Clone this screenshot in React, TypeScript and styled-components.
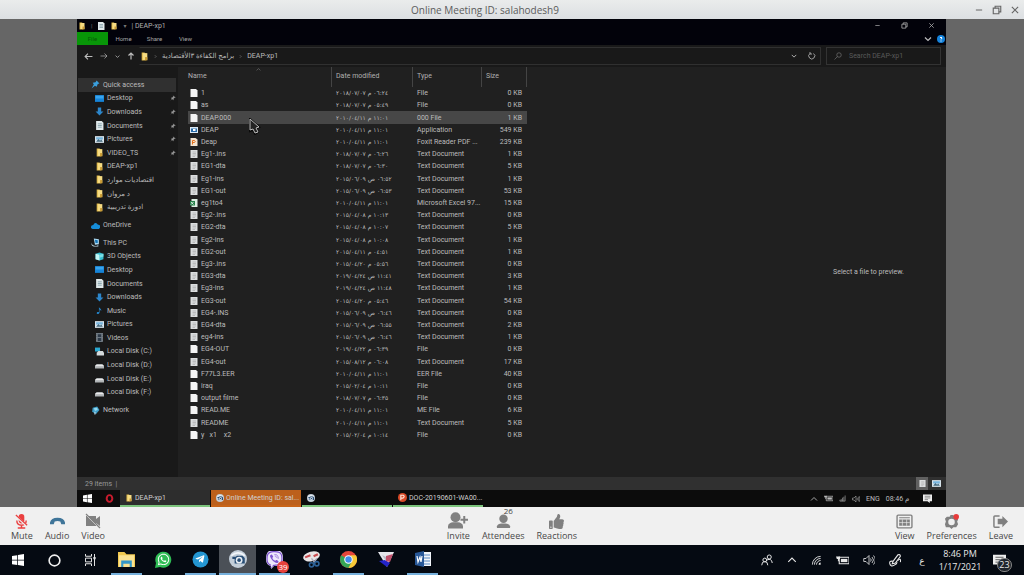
import React from "react";
import styled, { createGlobalStyle } from "styled-components";
import { FaThumbsUp, FaWhatsapp, FaViber, FaTelegramPlane } from "react-icons/fa";

const Global = createGlobalStyle`
  * { box-sizing: border-box; }
  body { margin: 0; background: #666; font-family: "Open Sans", "Noto Sans", "DejaVu Sans", sans-serif; }
  button { border: 0; padding: 0; background: none; font: inherit; color: inherit; }
  svg { display: block; flex: none; }
  ul { list-style: none; margin: 0; padding: 0; }
`;

/* ---------- page frame ---------- */
const Page = styled.div`
  min-height: 100vh;
  display: flex;
  flex-direction: column;
`;
const MeetingTitle = styled.header`
  height: 19px;
  display: grid;
  grid-template-columns: 1fr auto 1fr;
  align-items: center;
  background: linear-gradient(#eaecec, #dcdfe2);
  line-height: 18px;
  color: #5c5c5c;
`;
const TitleText = styled.h1`
  grid-column: 2;
  margin: 0 0 0 -54px;
  font-size: 10px;
  font-weight: 400;
`;
const WindowButtons = styled.div`
  justify-self: end;
  display: flex;
  gap: 8px;
  padding-right: 4px;
  color: #666;
`;
const Stage = styled.main`
  flex: 1;
  display: flex;
  padding: 0 78px 0 77px;
  background: #666;
`;
const SharedScreen = styled.section`
  flex: 1;
  min-width: 0;
  display: flex;
  flex-direction: column;
  background: #202020;
  color: #bcbcbc;
  font-family: Roboto, "Open Sans", "DejaVu Sans", sans-serif;
  font-size: 7px;
  line-height: 10px;
`;

/* ---------- explorer window ---------- */
const ExplorerTitle = styled.div`
  height: 13px;
  display: flex;
  align-items: center;
  gap: 5px;
  padding-left: 1px;
  background: #02020a;
  color: #b0b0b0;
`;
const Thin = styled.span`
  color: #777;
  font-size: 6px;
`;
const ExplorerButtons = styled.div`
  margin-left: auto;
  display: flex;
  gap: 20px;
  padding-right: 11px;
`;
const Ribbon = styled.nav`
  height: 13px;
  display: flex;
  align-items: stretch;
  background: #02020a;
  font-size: 6px;
`;
const RibbonTab = styled.button<{ $file?: boolean }>`
  width: 31px;
  background: ${(p) => (p.$file ? "#089608" : "transparent")};
  color: ${(p) => (p.$file ? "#075a07" : "#a5a5a5")};
`;
const RibbonEnd = styled.div`
  margin-left: auto;
  display: flex;
  align-items: center;
  gap: 5px;
  padding-right: 1px;
`;
const NavRow = styled.div`
  height: 22px;
  display: flex;
  align-items: center;
  padding: 0 5px 0 7px;
  background: #191919;
`;
const NavButtons = styled.div`
  width: 55px;
  display: flex;
  align-items: center;
  gap: 7px;
`;
const AddressBar = styled.div`
  flex: 1;
  height: 18px;
  display: flex;
  align-items: center;
  gap: 4px;
  margin-right: 5px;
  padding: 0 4px 0 0;
  border: 1px solid #303030;
  border-left-color: transparent;
`;
const AddressEnd = styled.div`
  margin-left: auto;
  display: flex;
  align-items: center;
  gap: 11px;
`;
const SearchBox = styled.label`
  width: 115px;
  height: 18px;
  display: flex;
  align-items: center;
  gap: 7px;
  padding: 0 7px;
  border: 1px solid #333;
  color: #777;
`;
const SearchInput = styled.input`
  width: 80px;
  border: 0;
  padding: 0;
  background: none;
  font: inherit;
  color: #aaa;
  &::placeholder { color: #5a5a5a; opacity: 1; }
`;
const ExplorerBody = styled.div`
  flex: 1;
  display: flex;
`;
const Sidebar = styled.aside`
  width: 101px;
  padding: 11px 2px 0 1px;
  background: #191919;
`;
const Group = styled.ul<{ $height: number }>`
  height: ${(p) => p.$height}px;
  margin-bottom: 4px;
  display: flex;
  flex-direction: column;
`;
const SideItem = styled.li<{ $root?: boolean; $active?: boolean }>`
  flex: 1;
  display: flex;
  align-items: center;
  gap: 3px;
  padding-left: ${(p) => (p.$root ? 13 : 17)}px;
  background: ${(p) => (p.$active ? "#303030" : "transparent")};
  white-space: nowrap;
`;
const PinSlot = styled.span`
  margin-left: auto;
`;
const ListPane = styled.div`
  flex: 1;
  position: relative;
  padding: 0 0 0 10px;
`;
const Files = styled.table`
  width: 339px;
  height: 374px;
  table-layout: fixed;
  border-collapse: separate;
  border-spacing: 0;
  white-space: nowrap;
`;
const Head = styled.th<{ $w: number }>`
  width: ${(p) => p.$w}px;
  height: 20px;
  padding: 0 0 2px ${(p) => (p.$w === 144 ? 0 : 4)}px;
  border-right: 1px solid #444;
  font-weight: 400;
  text-align: left;
  color: #b0b0b0;
`;
const FileRow = styled.tr<{ $selected?: boolean }>`
  background: ${(p) => (p.$selected ? "#474747" : "transparent")};
`;
const Cell = styled.td<{ $kind?: "name" | "size" }>`
  padding: 0 ${(p) => (p.$kind === "size" ? 5 : 0)}px 0 ${(p) => (p.$kind === "name" ? 2 : 4)}px;
  text-align: ${(p) => (p.$kind === "size" ? "right" : "left")};
  overflow: hidden;
`;
const NameBox = styled.div`
  display: flex;
  align-items: center;
  gap: 3px;
  white-space: pre;
`;
const DateText = styled.span`
  display: block;
  direction: ltr;
  unicode-bidi: bidi-override;
  font-family: "DejaVu Sans", sans-serif;
  font-size: 6px;
`;
const Pointer = styled.div`
  position: absolute;
  left: 71px;
  top: 51px;
`;
const SortMark = styled.div`
  position: absolute;
  left: 78px;
  top: 0;
  color: #888;
`;
const Preview = styled.aside`
  width: 155px;
  display: flex;
  align-items: center;
  justify-content: center;
`;
const StatusBar = styled.div`
  height: 13px;
  display: flex;
  align-items: center;
  padding: 0 4px 0 8px;
  background: #303030;
  color: #999;
`;
const ViewButtons = styled.div`
  margin-left: auto;
  display: flex;
  gap: 2px;
`;
const ViewButton = styled.button<{ $on?: boolean }>`
  width: 12px;
  height: 13px;
  display: grid;
  place-items: center;
  background: ${(p) => (p.$on ? "#606060" : "transparent")};
`;
const InnerTaskbar = styled.div`
  height: 17px;
  display: flex;
  background: #0c0c0c;
`;
const InnerStart = styled.button<{ $w: number }>`
  width: ${(p) => p.$w}px;
  display: grid;
  place-items: center;
`;
const InnerTask = styled.button<{ $w: number; $bg: string; $line: string }>`
  width: ${(p) => p.$w}px;
  display: flex;
  align-items: center;
  gap: 2px;
  padding-left: 5px;
  margin-right: 1px;
  background: ${(p) => p.$bg};
  border-bottom: 2px solid ${(p) => p.$line};
  color: #d0d0d0;
  white-space: nowrap;
`;
const InnerTray = styled.div`
  margin-left: auto;
  display: flex;
  align-items: center;
  gap: 6px;
  padding-right: 14px;
`;

/* ---------- meeting toolbar ---------- */
const Toolbar = styled.div`
  height: 38px;
  display: grid;
  grid-template-columns: 1fr auto 1fr;
  background: #f0f0f0;
  color: #484848;
`;
const ToolGroup = styled.div<{ $align?: string }>`
  display: flex;
  gap: 12px;
  padding: 0 11px;
  justify-content: ${(p) => p.$align || "flex-start"};
`;
const Tool = styled.button`
  display: flex;
  flex-direction: column;
  align-items: center;
  padding-top: 5px;
  font-size: 9px;
  line-height: 12px;
`;
const ToolIcon = styled.span<{ $color?: string }>`
  height: 18px;
  display: flex;
  align-items: center;
  position: relative;
  color: ${(p) => p.$color || "#808080"};
`;
const Count = styled.span`
  position: absolute;
  left: 8px;
  top: -7px;
  font-size: 8px;
  color: #444;
`;

/* ---------- desktop taskbar ---------- */
const Taskbar = styled.footer`
  height: 30px;
  display: flex;
  background: #050a12;
  color: #e8e8e8;
`;
const TaskButton = styled.button<{ $run?: boolean; $active?: boolean }>`
  width: ${(p) => (p.$active ? 37 : 31)}px;
  margin: 0 ${(p) => (p.$active ? 0 : 3)}px;
  display: grid;
  place-items: center;
  position: relative;
  background: ${(p) => (p.$active ? "#4b5057" : "transparent")};
  border-bottom: 2px solid ${(p) => (p.$run || p.$active ? "#76b0dc" : "transparent")};
`;
const SystemButton = styled.button`
  width: 36px;
  display: grid;
  place-items: center;
`;
const Badge = styled.span`
  position: absolute;
  right: 1px;
  bottom: 0;
  width: 12px;
  height: 12px;
  border-radius: 50%;
  background: #e8413c;
  font-size: 8px;
  line-height: 12px;
  color: #fff;
`;
const Tray = styled.div`
  margin-left: auto;
  display: flex;
  align-items: center;
  gap: 8px;
`;
const TrayIcons = styled.div`
  display: flex;
  align-items: center;
  gap: 14px;
`;
const Language = styled.span`
  width: 12px;
  font-size: 9px;
  text-align: center;
`;
const Clock = styled.time`
  width: 48px;
  font-size: 9px;
  line-height: 13px;
  text-align: center;
`;
const Notice = styled.button`
  position: relative;
  width: 32px;
  height: 30px;
  padding: 0 0 0 1px;
`;
const NoticeCount = styled.span`
  position: absolute;
  left: 5px;
  top: 13px;
  width: 15px;
  height: 14px;
  border: 1px solid #888;
  border-radius: 7px;
  background: #20252c;
  font-size: 9px;
  line-height: 12px;
`;

/* ---------- drawings ---------- */
type IconProps = { kind: string; size?: number };

function Icon({ kind, size = 9 }: IconProps) {
  const line = { fill: "none", stroke: "currentColor", strokeWidth: 1.3 };
  const art: Record<string, React.ReactNode> = {
    folder: (<><path d="M3 1h5l2 2v12H3z" fill="#e0b94a" /><path d="M5 2h8v12H5z" fill="#f6dc83" /><path d="M9 9h4v6H9z" fill="#c99b34" /></>),
    page: (<path d="M1 0h11l3 3v13H1z" fill="#f4f4f4" />),
    text: (<><path d="M1 0h14v16H1z" fill="#dcdedf" /><path d="M5 4h7M5 7h7M5 10h7M5 13h5" stroke="#999" strokeWidth="1" /></>),
    app: (<><path d="M0 2h16v12H0z" fill="#dce9f4" /><path d="M2 5h12v7H2z" fill="#286aa7" /><path d="M6 6h5v4H6z" fill="#fff" /></>),
    pdf: (<><path d="M1 0h10l4 3v13H1z" fill="#f5e4d0" /><path d="M5 13V5h4q3 1 0 4H6" fill="none" stroke="#e4711c" strokeWidth="2" /></>),
    excel: (<><path d="M3 0h12v16H3z" fill="#dceee2" /><path d="M0 4h10v9H0z" fill="#27804a" /><path d="m2 6 5 5m0-5-5 5" stroke="#fff" strokeWidth="1.5" /></>),
    star: (<path d="M10 1l5 5-3 1-2 5-3-2-6 5 4-7-2-3 5-1z" fill="#3aa0de" />),
    desktop: (<><path d="M0 2h16v12H0z" fill="#1684d8" /><path d="M1 3h14v5H1z" fill="#38a5ef" /></>),
    download: (<path d="M5 1h6v7h4l-7 7-7-7h4z" fill="#2c86cb" />),
    doc: (<><path d="M2 0h10l3 3v13H2z" fill="#dfe8ea" /><path d="M5 5h7M5 8h7M5 11h7" stroke="#71909c" strokeWidth="1.3" /></>),
    picture: (<><path d="M0 2h16v12H0z" fill="#d8e4ec" /><path d="M2 4h12v4H2z" fill="#76b4de" /><path d="m2 12 4-5 3 3 2-2 3 4z" fill="#43697e" /></>),
    cloud: (<path d="M3 14q-5-1-2-6l3-1q3-6 8-1 6 1 4 6l-2 2z" fill="#168dd9" />),
    pc: (<><path d="M5 1l9 1v9l-7 1z" fill="#a9d7ef" /><path d="M7 3l5 1v5L8 9z" fill="#1675b5" /><path d="M1 8q0 6 8 6l4-1v2H5Q0 14 1 8" fill="#c5e4f2" /></>),
    cube: (<><path d="M1 3l7-2 7 2v10l-7 2-7-2z" fill="#38bdd0" /><path d="M1 3l7 2v10l-7-2z" fill="#c5f5f5" /><path d="M8 5l7-2v5l-7 2z" fill="#78dfe6" /></>),
    music: (<path d="M7 1c0 4 5 3 4 8-1-2-2-3-3-3v6c-1 3-5 3-5 1s2-3 4-2z" fill="#2588cf" />),
    video: (<><path d="M2 0h12v16H2z" fill="#6c7781" /><path d="M5 2h6v5H5zm0 7h6v5H5z" fill="#2c3947" /><path d="M3 1v14M13 1v14" stroke="#bbb" strokeDasharray="1 2" /></>),
    disk: (<><path d="M0 10l3-3h10l3 3v5H0z" fill="#b0b4b6" /><path d="M1 9h14v2H1z" fill="#eee" /></>),
    sysdisk: (<><path d="M0 1h9v7H0z" fill="#29a8d1" /><path d="M3 10l3-3h8l2 3v5H3z" fill="#d4dadc" /></>),
    network: (<><path d="M3 3l8-2 4 6-6 7-7-4z" fill="#3e9dc7" /><path d="M5 4l6-1 1 4-5 2z" fill="#93d9ef" /><path d="M7 10v5" stroke="#c1e1ef" strokeWidth="2" /></>),
    pin: (<path d="M9 2l5 5-2 0-3 3v3L3 8l3-1 3-3zM6 10l-4 4" fill="#999" stroke="#999" />),
    min: (<path d="M3 8h10" {...line} strokeWidth={1.6} />),
    max: (<><path d="M2 5h9v9H2z" {...line} strokeWidth={1.8} /><path d="M5 5V2h9v9h-3" {...line} strokeWidth={1.8} /></>),
    close: (<path d="M3 3l10 10M13 3L3 13" {...line} strokeWidth={1.8} />),
    left: (<path d="M15 8H2m5-5L2 8l5 5" {...line} strokeWidth={2} />),
    right: (<path d="M1 8h13M9 3l5 5-5 5" {...line} />),
    up: (<path d="M8 15V2M3 7l5-5 5 5" {...line} strokeWidth={2.4} />),
    down: (<path d="M2 5l6 6 6-6" {...line} strokeWidth={2.4} />),
    chevron: (<path d="M2 11l6-6 6 6" {...line} strokeWidth={1.7} />),
    next: (<path d="M6 4l4 4-4 4" {...line} />),
    refresh: (<path d="M11 3a6 6 0 1 1-7 0M4 0v4h4" {...line} strokeWidth={1.6} />),
    search: (<><circle cx="10" cy="6" r="4.5" {...line} /><path d="M7 9l-6 6" {...line} /></>),
    windows: (<path d="M0 2.5l7-1v6H0zM8 1.3L16 0v7.5H8zM0 8.5h7v6l-7-1zM8 8.5h8V16l-8-1.3z" fill="#fff" />),
    opera: (<ellipse cx="8" cy="8" rx="5" ry="6" fill="none" stroke="#c81c2e" strokeWidth="3.5" />),
    ball: (<><circle cx="8" cy="8" r="8" fill="#c3ced9" /><path d="M2 5q6-5 12 0" fill="none" stroke="#f2f6fa" strokeWidth="1.5" /><path d="M3 8V6h3l1-1h5l2 2v5H5V8z" fill="#284e76" /><circle cx="9" cy="9" r="3" fill="#e8eef4" /><circle cx="9" cy="9" r="1.6" fill="#284e76" /></>),
    ppt: (<><circle cx="8" cy="8" r="8" fill="#d84a28" /><path d="M5 13V4h4q4 2 0 5H6" fill="none" stroke="#ffe4d8" strokeWidth="2" /></>),
    battery: (<><path d="M4 4h12v8H4z" {...line} /><path d="M6 6h8v4H6z" fill="currentColor" /><path d="M0 3h5v3H1z" fill="currentColor" /><path d="M3 6v3" {...line} /></>),
    wifi: (<><path d="M2 14A12 12 0 0 1 14 2M5 14a9 9 0 0 1 9-9M8 14a6 6 0 0 1 6-6" {...line} /><path d="M11 14a3 3 0 0 1 3-3v3z" fill="currentColor" /></>),
    bars: (<path d="M2 14v-3M5 14V9M8 14V6M11 14V4M14 14V1M2 14h12" {...line} />),
    sound: (<path d="M1 6h3l4-4v12l-4-4H1zM10 6q2 2 0 4M12 4q4 4 0 8M14 2q5 6 0 12" {...line} strokeWidth={1.1} />),
    note: (<><path d="M0 1h16v12h-4v3l-4-3H0z" fill="#eee" /><path d="M3 4h10M3 7h10M3 10h6" stroke="#444" /></>),
    people: (<><circle cx="5" cy="8" r="2.5" {...line} /><path d="M1 15q0-5 4-5t4 5" {...line} /><circle cx="11" cy="4" r="2.7" {...line} /><path d="M8 8q6-3 7 4" {...line} /></>),
    pen: (<><path d="M5 9l6-8q3-1 3 2l-6 8-4 1z" {...line} /><path d="M5 9q-5-1-4 3t5 2 4-4M11 8q4-4 3 2" {...line} /></>),
    cortana: (<circle cx="8" cy="8" r="6.6" fill="none" stroke="#eee" strokeWidth="2" />),
    tasks: (<><path d="M2 0v3h8V0M2 5.5h8v5H2zM2 16v-3h8v3M14 0v16" {...line} /><path d="M12.5 4h3v3h-3z" fill="currentColor" /></>),
    explorer: (<><path d="M0 1h6l2 2h8v12H0z" fill="#f1c950" /><path d="M1 4h14v11H1z" fill="#fbe393" /><path d="M3 9h10v6h-2v-3H5v3H3z" fill="#3498c8" /></>),
    snip: (<><ellipse cx="8" cy="5" rx="8" ry="4.5" transform="rotate(-15 8 5)" fill="#e9e5e6" /><path d="M2 6l5-2M10 5l4-2" stroke="#c84c50" strokeWidth="2" /><path d="M8 7l3 4M13 7l-3 4" stroke="#aab" strokeWidth="1.3" /><circle cx="8" cy="13" r="2" fill="none" stroke="#2d6298" strokeWidth="1.5" /><circle cx="13" cy="12" r="2" fill="none" stroke="#2d6298" strokeWidth="1.5" /></>),
    chrome: (<><circle cx="8" cy="8" r="8" fill="#e4463a" /><path d="M8 8L1.1 4A8 8 0 0 0 8 16l4-6z" fill="#35a554" /><path d="M8 16l4-8-2-4h5A8 8 0 0 1 8 16" fill="#f7ca38" /><circle cx="8" cy="8" r="4" fill="#fff" /><circle cx="8" cy="8" r="3" fill="#408be8" /></>),
    gem: (<><path d="M0 1h16l-7 15z" fill="#e5e6ec" /><path d="M1 10l6-1 5 3-3 4z" fill="#2424c8" /><path d="M8 5l7-2-3 8-4-1z" fill="#c0506c" /><path d="M4 4l4 2v4z" fill="#b8bac8" /></>),
    word: (<><path d="M6 1h10v14H6z" fill="#f2f5fa" /><path d="M8 4h7M8 7h7M8 10h7M8 13h7" stroke="#5688c2" /><path d="M0 2l9-2v16l-9-2z" fill="#285898" /><path d="M2 5l1 6 2-5 1 5 1-6" fill="none" stroke="#fff" strokeWidth="1.2" /></>),
    phone: (<path d="M0 9q1-5 8-5t8 5v2l-4 0-1-3Q8 7 5 8l-1 3H0z" fill="#3f7599" />),
    mic: (<><rect x="5" y="0" width="6" height="10" rx="3" fill="currentColor" /><path d="M3 7q0 5 5 5t5-5M8 12v3M4 15h8" {...line} strokeWidth={1.5} /><path d="M2 2l12 11" stroke="#f0f0f0" strokeWidth="2.4" /><path d="M2 1l12 11" stroke="currentColor" strokeWidth="1.3" /></>),
    camera: (<><path d="M1 3h10v3l4-3v10l-4-3v3H1z" fill="currentColor" /><path d="M0 1l14 14" stroke="#f0f0f0" strokeWidth="1" /><path d="M1 1l14 14" stroke="currentColor" strokeWidth="1.3" /></>),
    person: (<><circle cx="8" cy="5" r="4.5" fill="currentColor" /><path d="M1 15v-2q1-3 5-3h4q4 0 5 3v2z" fill="currentColor" /></>),
    invite: (<><circle cx="6" cy="5" r="4" fill="currentColor" /><path d="M0 14v-2q1-3 4-3h4q3 0 4 3v2z" fill="currentColor" /><path d="M13 4v6M10 7h6" stroke="currentColor" strokeWidth="1.6" /></>),
    grid: (<><rect x="1" y="2" width="14" height="12" rx="1" {...line} /><path d="M3 4h10v1H3zM3 6h10v6H3z" fill="currentColor" /><path d="M3 9h10M6 6v6M10 6v6" stroke="#f0f0f0" strokeWidth="0.6" /></>),
    gear: (<><path d="M7 1h3l1 2 3 0 1 3-1 2 1 3-2 3-3 0-2 2-2-2-4 0-1-3 1-3-1-3 2-2 3 0z" fill="currentColor" /><circle cx="8" cy="8.500" r="3.500" fill="#f0f0f0" /><circle cx="13" cy="3" r="3" fill="#e83b3b" /></>),
    leave: (<><path d="M7 2H2Q1 2 1 3v10q0 1 1 1h5" {...line} strokeWidth={1.6} /><path d="M5 5h5V2l6 6-6 6v-3H5z" fill="currentColor" /></>),
  };
  return <svg width={size} height={size} viewBox="0 0 16 16" aria-hidden="true">{art[kind]}</svg>;
}

/* ---------- data ---------- */
const quick: [string, string, boolean?][] = [
  ["desktop", "Desktop", true], ["download", "Downloads", true], ["doc", "Documents", true],
  ["picture", "Pictures", true], ["folder", "VIDEO_TS", true], ["folder", "DEAP-xp1"],
  ["folder", "اقتصاديات موارد"], ["folder", "د مروان"], ["folder", "ادورة تدريبية"],
];
const places: [string, string][] = [
  ["cube", "3D Objects"], ["desktop", "Desktop"], ["doc", "Documents"], ["download", "Downloads"],
  ["music", "Music"], ["picture", "Pictures"], ["video", "Videos"], ["sysdisk", "Local Disk (C:)"],
  ["disk", "Local Disk (D:)"], ["disk", "Local Disk (E:)"], ["disk", "Local Disk (F:)"],
];
const T = "Text Document";
const files: [string, string, string, string, string][] = [
  ["page", "1", "٢٠١٨/٠٧/٠٧ م ٠٦:٢٤", "File", "0 KB"],
  ["page", "as", "٢٠١٨/٠٧/٠٧ م ٠٥:٤٩", "File", "0 KB"],
  ["page", "DEAP.000", "٢٠١٠/٠٤/١١ م ١١:٠١", "000 File", "1 KB"],
  ["app", "DEAP", "٢٠١٠/٠٤/١١ م ١١:٠١", "Application", "549 KB"],
  ["pdf", "Deap", "٢٠١٠/٠٤/١١ م ١١:٠١", "Foxit Reader PDF ...", "239 KB"],
  ["text", "Eg1-.ins", "٢٠١٨/٠٧/٠٧ م ٠٦:٢٦", T, "1 KB"],
  ["text", "EG1-dta", "٢٠١٨/٠٧/٠٧ م ٠٦:٣٠", T, "5 KB"],
  ["text", "Eg1-ins", "٢٠١٥/٠٦/٠٩ ص ٠٦:٥٢", T, "1 KB"],
  ["text", "EG1-out", "٢٠١٥/٠٦/٠٩ ص ٠٦:٥٣", T, "53 KB"],
  ["excel", "eg1to4", "٢٠١٠/٠٤/١١ م ١١:٠١", "Microsoft Excel 97...", "15 KB"],
  ["text", "Eg2-.ins", "٢٠١٥/٠٤/٠٨ م ١٠:١٣", T, "0 KB"],
  ["text", "EG2-dta", "٢٠١٥/٠٤/٠٨ م ١٠:٠٧", T, "5 KB"],
  ["text", "Eg2-ins", "٢٠١٥/٠٤/٠٨ م ١٠:٠٨", T, "1 KB"],
  ["text", "EG2-out", "٢٠١٥/٠٤/١١ م ٠٤:٥١", T, "1 KB"],
  ["text", "Eg3-.ins", "٢٠١٥/٠٤/٢٠ م ٠٥:٥٦", T, "0 KB"],
  ["text", "EG3-dta", "٢٠١٩/٠٤/٢٤ ص ١١:٤١", T, "3 KB"],
  ["text", "Eg3-ins", "٢٠١٩/٠٤/٢٤ ص ١١:٤٨", T, "1 KB"],
  ["text", "EG3-out", "٢٠١٥/٠٤/٢٠ م ٠٥:٤٦", T, "54 KB"],
  ["text", "EG4-.INS", "٢٠١٥/٠٦/٠٩ ص ٠٦:٤٦", T, "0 KB"],
  ["text", "EG4-dta", "٢٠١٥/٠٦/٠٩ ص ٠٦:٥٥", T, "2 KB"],
  ["text", "eg4-ins", "٢٠١٥/٠٦/٠٩ ص ٠٦:٤٦", T, "1 KB"],
  ["page", "EG4-OUT", "٢٠١٩/٠٤/٢٢ م ٠٦:٣٩", "File", "0 KB"],
  ["text", "EG4-out", "٢٠١٥/٠٨/١٢ م ٠٦:٠٨", T, "17 KB"],
  ["page", "F77L3.EER", "٢٠١٠/٠٤/١١ م ١١:٠١", "EER File", "40 KB"],
  ["page", "iraq", "٢٠١٥/٠٢/٠٤ م ١٠:١١", "File", "0 KB"],
  ["page", "output filme", "٢٠١٨/٠٧/٠٧ م ٠٦:٣٥", "File", "0 KB"],
  ["page", "READ.ME", "٢٠١٠/٠٤/١١ م ١١:٠١", "ME File", "6 KB"],
  ["text", "README", "٢٠١٠/٠٤/١١ م ١١:٠١", T, "5 KB"],
  ["page", "y   x1    x2", "٢٠١٥/٠٢/٠٤ م ١٠:١٤", "File", "0 KB"],
];

function Explorer() {
  return (
    <>
      <ExplorerTitle>
        <Icon kind="folder" size={8} /><Thin>|</Thin><Icon kind="doc" size={8} /><Icon kind="folder" size={8} />
        <Thin>▾</Thin><span>| DEAP-xp1</span>
        <ExplorerButtons>
          <button aria-label="Minimize folder"><Icon kind="min" size={7} /></button>
          <button aria-label="Restore folder"><Icon kind="max" size={7} /></button>
          <button aria-label="Close folder"><Icon kind="close" size={7} /></button>
        </ExplorerButtons>
      </ExplorerTitle>
      <Ribbon>
        <RibbonTab $file>File</RibbonTab><RibbonTab>Home</RibbonTab><RibbonTab>Share</RibbonTab><RibbonTab>View</RibbonTab>
        <RibbonEnd>
          <Icon kind="down" size={8} />
          <svg width="8" height="8" viewBox="0 0 8 8"><circle cx="4" cy="4" r="4" fill="#1583dc" /><path d="M3 3q1-2 2 0L4 4.500M4 5.500v1" fill="none" stroke="#fff" /></svg>
        </RibbonEnd>
      </Ribbon>
      <NavRow>
        <NavButtons>
          <button aria-label="Back"><Icon kind="left" size={9} /></button>
          <button aria-label="Forward"><Icon kind="right" size={8} /></button>
          <button aria-label="Recent"><Icon kind="down" size={5} /></button>
          <button aria-label="Up"><Icon kind="up" size={8} /></button>
        </NavButtons>
        <AddressBar>
          <Icon kind="folder" size={9} /><Icon kind="next" size={5} />
          <span dir="rtl">برامج الكفاءة ٣الأقتصادية</span><Icon kind="next" size={5} /><span>DEAP-xp1</span>
          <AddressEnd><Icon kind="down" size={6} /><Icon kind="refresh" size={8} /></AddressEnd>
        </AddressBar>
        <SearchBox><Icon kind="search" size={8} /><SearchInput placeholder="Search DEAP-xp1" aria-label="Search DEAP-xp1" /></SearchBox>
      </NavRow>
      <ExplorerBody>
        <Sidebar>
          <Group $height={136}>
            <SideItem $root $active><Icon kind="star" size={9} />Quick access</SideItem>
            {quick.map(([icon, name, pinned]) => (
              <SideItem key={name}><Icon kind={icon} size={9} />{name}{pinned && <PinSlot><Icon kind="pin" size={6} /></PinSlot>}</SideItem>
            ))}
          </Group>
          <Group $height={14}><SideItem $root><Icon kind="cloud" size={9} />OneDrive</SideItem></Group>
          <Group $height={163}>
            <SideItem $root><Icon kind="pc" size={9} />This PC</SideItem>
            {places.map(([icon, name]) => <SideItem key={name}><Icon kind={icon} size={9} />{name}</SideItem>)}
          </Group>
          <Group $height={14}><SideItem $root><Icon kind="network" size={9} />Network</SideItem></Group>
        </Sidebar>
        <ListPane>
          <Files>
            <thead><tr><Head $w={144}>Name</Head><Head $w={81}>Date modified</Head><Head $w={69}>Type</Head><Head $w={45}>Size</Head></tr></thead>
            <tbody>
              {files.map(([icon, name, date, type, size]) => (
                <FileRow key={name} $selected={name === "DEAP.000"}>
                  <Cell $kind="name"><NameBox><Icon kind={icon} size={8} />{name}</NameBox></Cell>
                  <Cell><DateText>{date}</DateText></Cell>
                  <Cell>{type}</Cell>
                  <Cell $kind="size">{size}</Cell>
                </FileRow>
              ))}
            </tbody>
          </Files>
          <SortMark><Icon kind="chevron" size={5} /></SortMark>
          <Pointer><svg width="12" height="17" viewBox="0 0 12 17"><path d="M1 1l9 8-3 1 2 4-3 2-2-4-3 1z" fill="#161616" stroke="#0a0a0a" strokeWidth="2" /><path d="M1 1l9 8-3 1 2 4-3 1-2-4-3 1z" fill="#222" stroke="#bbb" /></svg></Pointer>
        </ListPane>
        <Preview>Select a file to preview.</Preview>
      </ExplorerBody>
      <StatusBar>
        29 items &nbsp;|
        <ViewButtons>
          <ViewButton $on aria-label="Details"><Icon kind="text" size={7} /></ViewButton>
          <ViewButton aria-label="Thumbnails"><Icon kind="picture" size={9} /></ViewButton>
        </ViewButtons>
      </StatusBar>
      <InnerTaskbar>
        <InnerStart $w={21} aria-label="Shared start"><Icon kind="windows" size={9} /></InnerStart>
        <InnerStart $w={22} aria-label="Opera"><Icon kind="opera" size={9} /></InnerStart>
        <InnerTask $w={90} $bg="#2d2d2d" $line="#7cc47c"><Icon kind="folder" size={8} />DEAP-xp1</InnerTask>
        <InnerTask $w={90} $bg="#bc601c" $line="#c86418"><Icon kind="ball" size={8} />Online Meeting ID: sal...</InnerTask>
        <InnerTask $w={90} $bg="#0c0c0c" $line="#7cc47c" aria-label="Meeting controls"><Icon kind="ball" size={8} /></InnerTask>
        <InnerTask $w={90} $bg="#0c0c0c" $line="#7cc47c"><Icon kind="ppt" size={9} />DOC-20190601-WA00...</InnerTask>
        <InnerTray>
          <Icon kind="chevron" size={8} /><Icon kind="battery" size={9} /><Icon kind="bars" size={7} /><Icon kind="sound" size={8} />
          <span>ENG</span><span dir="ltr">08:46 م</span>&nbsp;<Icon kind="note" size={9} />
        </InnerTray>
      </InnerTaskbar>
    </>
  );
}

export default function App() {
  return (
    <Page>
      <Global />
      <MeetingTitle>
        <TitleText>Online Meeting ID: salahodesh9</TitleText>
        <WindowButtons>
          <button aria-label="Minimize"><Icon kind="min" size={10} /></button>
          <button aria-label="Restore"><Icon kind="max" size={10} /></button>
          <button aria-label="Close"><Icon kind="close" size={10} /></button>
        </WindowButtons>
      </MeetingTitle>
      <Stage><SharedScreen><Explorer /></SharedScreen></Stage>
      <Toolbar>
        <ToolGroup>
          <Tool><ToolIcon $color="#ea3f3f"><Icon kind="mic" size={15} /></ToolIcon>Mute</Tool>
          <Tool><ToolIcon><Icon kind="phone" size={15} /></ToolIcon>Audio</Tool>
          <Tool><ToolIcon><Icon kind="camera" size={16} /></ToolIcon>Video</Tool>
        </ToolGroup>
        <ToolGroup>
          <Tool><ToolIcon><Icon kind="invite" size={20} /></ToolIcon>Invite</Tool>
          <Tool><ToolIcon><Icon kind="person" size={15} /><Count>26</Count></ToolIcon>Attendees</Tool>
          <Tool><ToolIcon><FaThumbsUp size={15} /></ToolIcon>Reactions</Tool>
        </ToolGroup>
        <ToolGroup $align="flex-end">
          <Tool><ToolIcon><Icon kind="grid" size={17} /></ToolIcon>View</Tool>
          <Tool><ToolIcon><Icon kind="gear" size={15} /></ToolIcon>Preferences</Tool>
          <Tool><ToolIcon><Icon kind="leave" size={15} /></ToolIcon>Leave</Tool>
        </ToolGroup>
      </Toolbar>
      <Taskbar>
        <SystemButton aria-label="Start"><Icon kind="windows" size={12} /></SystemButton>
        <SystemButton aria-label="Search"><Icon kind="cortana" size={13} /></SystemButton>
        <SystemButton aria-label="Task view"><Icon kind="tasks" size={12} /></SystemButton>
        <TaskButton $run aria-label="File Explorer"><Icon kind="explorer" size={17} /></TaskButton>
        <TaskButton aria-label="WhatsApp">
          <svg width="17" height="17" viewBox="0 0 17 17"><path d="M0 17l1-5a8 8 0 1 1 4 4z" fill="#2fbd55" /><g transform="translate(2 2)" color="#fff"><FaWhatsapp size={13} /></g></svg>
        </TaskButton>
        <TaskButton $run aria-label="Telegram">
          <svg width="17" height="17" viewBox="0 0 17 17"><circle cx="8.500" cy="8.500" r="8" fill="#2496d2" /><g transform="translate(3 3)" color="#fff"><FaTelegramPlane size={10} /></g></svg>
        </TaskButton>
        <TaskButton $active aria-label="Meeting"><Icon kind="ball" size={18} /></TaskButton>
        <TaskButton $run aria-label="Viber">
          <svg width="19" height="19" viewBox="0 0 19 19"><path d="M4 1h11q3 1 3 8t-4 7H9l-3 3v-3q-5-1-5-7t3-8z" fill="#eee8fb" /><g transform="translate(1 1)" color="#7d55cf"><FaViber size={17} /></g></svg>
          <Badge>39</Badge>
        </TaskButton>
        <TaskButton aria-label="Snipping Tool"><Icon kind="snip" size={17} /></TaskButton>
        <TaskButton $run aria-label="Chrome"><Icon kind="chrome" size={17} /></TaskButton>
        <TaskButton aria-label="Gem"><Icon kind="gem" size={16} /></TaskButton>
        <TaskButton $run aria-label="Word"><Icon kind="word" size={16} /></TaskButton>
        <Tray>
          <TrayIcons>
            <Icon kind="people" size={12} /><Icon kind="chevron" size={10} /><Icon kind="wifi" size={11} /><Icon kind="battery" size={13} />
            <Icon kind="sound" size={12} /><Icon kind="pen" size={13} /><Language>ع</Language>
          </TrayIcons>
          <Clock>8:46 PM<br />1/17/2021</Clock>
          <Notice aria-label="Notifications"><Icon kind="note" size={13} /><NoticeCount>23</NoticeCount></Notice>
        </Tray>
      </Taskbar>
    </Page>
  );
}
